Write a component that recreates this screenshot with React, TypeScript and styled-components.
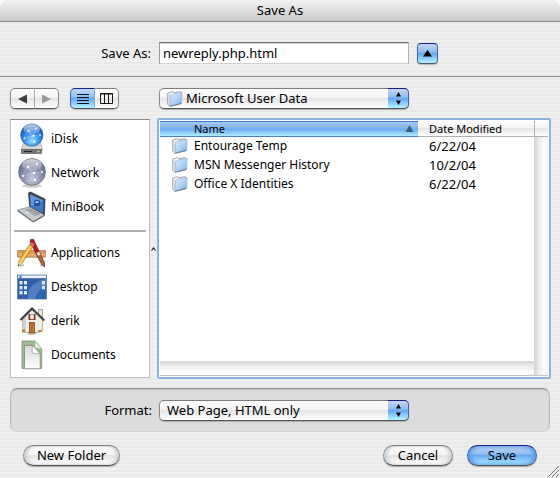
import React from "react";
import styled, { createGlobalStyle, css } from "styled-components";

const silver = "linear-gradient(#ffffff 0%, #f4f4f4 45%, #e4e4e4 50%, #f0f0f0 72%, #ffffff 100%)";
const aqua = "linear-gradient(#c3d9f4 0%, #8fbdf0 42%, #66a8ee 50%, #8ccbfb 74%, #b4f3ff 100%)";
const aquaEdge = "#1c1c86 #3f64a8 #4d545e #3f64a8";
const greyEdge = "#7d7d7d #8b8b8b #555555 #8b8b8b";

const GlobalStyle = createGlobalStyle`
  *, *::before, *::after { box-sizing: border-box; }
  body {
    margin: 0;
    background: #ffffff;
    color: #000000;
    font: 13px/16px "Noto Sans", "Open Sans", sans-serif;
  }
  button, input, select { font: inherit; color: inherit; margin: 0; }
  svg { display: block; flex: none; }
`;

const Sheet = styled.main`
  min-height: 100vh;
  display: flex;
  flex-direction: column;
  overflow: hidden;
  border-radius: 8px 8px 0 0;
  background: repeating-linear-gradient(#efefef 0 2px, #eaeaea 2px 4px);
`;

const TitleBar = styled.header`
  height: 22px;
  padding-top: 2px;
  text-align: center;
  background: linear-gradient(#f2f2f2, #dedede 50%, #c8c8c8);
  border-bottom: 1px solid #8a8a8a;
`;

const Title = styled.h1`
  margin: 0;
  font-size: 13px;
  line-height: 17px;
  font-weight: 400;
`;

const NameRow = styled.div`
  display: flex;
  align-items: center;
  height: 55px;
  padding: 8px 9px 0 0;
  border-bottom: 1px solid #8a8a8a;
`;

const FieldLabel = styled.label<{ $inset?: boolean }>`
  flex: none;
  width: ${(p) => (p.$inset ? 148 : 159)}px;
  padding-right: ${(p) => (p.$inset ? 7 : 8)}px;
  text-align: right;
`;

const NameInput = styled.input`
  width: 250px;
  height: 22px;
  padding: 0 3px;
  border: 1px solid;
  border-color: #6f6f6f #b5b5b5 #d0d0d0 #9c9c9c;
  border-radius: 0;
  background: #ffffff;
  box-shadow: inset 0 1px 0 #d5d5d5;
  outline: none;
`;

const DiscloseButton = styled.button`
  display: grid;
  place-items: center;
  width: 21px;
  height: 21px;
  margin-left: 8px;
  padding: 0;
  border: 1px solid;
  border-color: ${aquaEdge};
  border-radius: 4px;
  background: ${aqua};
  box-shadow: 0 1px 1px #b4b4b4;
`;

const Toolbar = styled.div`
  display: flex;
  padding: 11px 9px 9px 10px;
`;

const Segments = styled.div`
  display: flex;
  width: 49px;
  height: 21px;
  margin-right: 11px;
  box-shadow: 0 1px 1px #bcbcbc;
  border-radius: 5px;
`;

const Segment = styled.button<{ $on?: boolean }>`
  flex: 1;
  display: grid;
  place-items: center;
  padding: 0;
  border: 1px solid;
  border-color: ${greyEdge};
  background: ${silver};
  &:first-child { border-radius: 5px 0 0 5px; }
  &:last-child { border-radius: 0 5px 5px 0; border-left-width: 0; }
  &:first-child { border-right-color: #a8a8a8; }
  ${(p) => p.$on && css`
    && { border-color: ${aquaEdge}; border-right-color: #78afe8; }
    background: ${aqua};
  `}
`;

const PopupWrap = styled.div<{ $indent?: boolean }>`
  display: grid;
  grid-template-columns: 8px 1fr 21px;
  align-items: center;
  width: 250px;
  height: 21px;
  border-radius: 5px;
  box-shadow: 0 1px 1px #b0b0b0;
  margin-left: ${(p) => (p.$indent ? 29 : 0)}px;
  > svg { grid-row: 1; grid-column: 2; z-index: 1; pointer-events: none; }
`;

const PopupSelect = styled.select<{ $icon?: boolean }>`
  grid-row: 1;
  grid-column: 1 / -1;
  width: 100%;
  height: 21px;
  padding: 0 24px 1px ${(p) => (p.$icon ? 26 : 7)}px;
  appearance: none;
  border: 1px solid;
  border-color: ${greyEdge};
  border-radius: 5px;
  background: ${silver};
  outline: none;
`;

const PopupCap = styled.span`
  grid-row: 1;
  grid-column: 3;
  z-index: 1;
  display: grid;
  place-items: center;
  height: 21px;
  border: 1px solid;
  border-color: ${aquaEdge};
  border-left: 0;
  border-radius: 0 5px 5px 0;
  background: ${aqua};
  pointer-events: none;
`;

const Browser = styled.div`
  flex: 1;
  display: flex;
  padding: 0 9px 0 10px;
`;

const Sidebar = styled.nav`
  flex: none;
  width: 140px;
  margin: 1px 0;
  padding: 2px 3px 5px;
  border: 1px solid #bcbcbc;
  border-top-color: #8c8c8c;
  background: #ffffff;
`;

const Place = styled.button`
  display: grid;
  grid-template-columns: 33px 1fr;
  gap: 4px;
  align-items: center;
  width: 100%;
  height: 34px;
  padding: 0;
  border: 0;
  background: none;
  font-size: 12px;
  text-align: left;
  > svg { margin-left: 3px; }
`;

const Divider = styled.hr`
  height: 2px;
  margin: 6px 0 4px;
  border: 0;
  background: #b0b0b0;
`;

const Splitter = styled.div`
  display: grid;
  place-items: center;
  flex: none;
  width: 7px;
`;

const FileList = styled.section`
  flex: 1;
  display: grid;
  grid-template-columns: 1fr 14px;
  grid-template-rows: 16px 1fr 15px;
  min-height: 261px;
  border: 2px solid #8ab4de;
  border-radius: 2px;
  padding: 1px;
  background: #ffffff;
`;

const FileArea = styled.div`
  grid-row: 1 / 3;
  grid-column: 1;
`;

const FileTable = styled.table`
  width: 100%;
  table-layout: fixed;
  border-collapse: separate;
  border-spacing: 0;
`;

const HeadCell = styled.th<{ $sorted?: boolean }>`
  width: ${(p) => (p.$sorted ? "auto" : "116px")};
  height: 16px;
  padding: 0 0 0 ${(p) => (p.$sorted ? 34 : 11)}px;
  border-bottom: 1px solid ${(p) => (p.$sorted ? "#4d7fb8" : "#b0b0b0")};
  background: ${(p) => (p.$sorted ? "linear-gradient(#3a78cc 0 1px, #a6c9f0 1px, #82b4ea 45%, #6eacee 55%, #b0ecff)" : silver)};
  font-size: 11px;
  line-height: 15px;
  font-weight: 400;
  text-align: left;
`;

const HeadInner = styled.div`
  display: flex;
  align-items: center;
  justify-content: space-between;
  height: 15px;
  padding-right: 4px;
`;

const Cell = styled.td<{ $date?: boolean }>`
  height: 19px;
  padding: 0 0 2px ${(p) => (p.$date ? 11 : 12)}px;
  font-size: ${(p) => (p.$date ? 13 : 12)}px;
  white-space: nowrap;
`;

const FileName = styled.span`
  display: flex;
  align-items: center;
  gap: 6px;
`;

const HeadCorner = styled.div`
  border-left: 1px solid #b0b0b0;
  border-bottom: 1px solid #b0b0b0;
  background: ${silver};
`;

const VerticalTrack = styled.div`
  grid-column: 2;
  grid-row: 2 / 4;
  background: linear-gradient(90deg, #d2d2d2, #ececec 35%, #fdfdfd 75%, #f6f6f6);
  border-bottom: 1px solid #c4c4c4;
`;

const HorizontalTrack = styled.div`
  grid-column: 1;
  grid-row: 3;
  background: linear-gradient(#d2d2d2, #ececec 35%, #fdfdfd 75%, #f6f6f6);
  border-bottom: 1px solid #c4c4c4;
`;

const FormatPanel = styled.div`
  display: flex;
  align-items: center;
  height: 44px;
  margin: 9px 10px 0;
  border: 1px solid;
  border-color: #8c8c8c #bcbcbc #d0d0d0;
  border-radius: 7px;
  background: #dcdcdc;
  box-shadow: inset 0 1px 1px #c4c4c4;
`;

const Footer = styled.footer`
  display: flex;
  align-items: flex-start;
  gap: 14px;
  height: 46px;
  padding: 13px 0 0 23px;
`;

const PushButton = styled.button<{ $primary?: boolean; $leading?: boolean }>`
  width: ${(p) => (p.$leading ? 97 : 70)}px;
  height: 21px;
  margin-right: ${(p) => (p.$leading ? "auto" : "0")};
  padding: 0 0 1px;
  border: 1px solid;
  border-color: ${(p) => (p.$primary ? aquaEdge : greyEdge)};
  border-radius: 11px;
  background: ${(p) => (p.$primary ? aqua : silver)};
  box-shadow: 0 1px 1px #a8a8a8${(p) => (p.$primary ? ", inset 3px 0 4px #5c9be4, inset -3px 0 4px #5c9be4" : ", inset 3px 0 3px #d2d2d2, inset -3px 0 3px #d2d2d2")};
`;

const GripHolder = styled.div`
  align-self: flex-end;
  margin-left: -4px;
`;

const Folder = () => (
  <svg width="16" height="16" viewBox="0 0 16 16" aria-hidden="true">
    <defs>
      <linearGradient id="folderFace" x1="0" y1="0" x2="1" y2="1">
        <stop offset="0" stopColor="#dcecfb" />
        <stop offset=".5" stopColor="#b3d3f4" />
        <stop offset="1" stopColor="#75ace5" />
      </linearGradient>
    </defs>
    <path d="M.7 2.2 5.2.6 6.3 1.7 13.5.7V13L2.8 15.2.7 13.3Z" fill="#f4f4f4" stroke="#a3a7ad" />
    <path d="M1.8 3.2 2.7 14" stroke="#c7cbd0" fill="none" />
    <path d="M3.5 4.2 6.5 3.4 7.5 2.5 15.2 1.5 14.6 12 3.2 15.3Z" fill="url(#folderFace)" stroke="#90b4d8" strokeWidth=".7" />
    <path d="M3.2 15.3 14.6 12.2" stroke="#596f88" strokeWidth=".8" />
  </svg>
);

const Arrows = () => (
  <svg width="7" height="13" viewBox="0 0 7 13" aria-hidden="true">
    <path d="M3.5 0 6 4.5H1ZM1 8.5H6L3.5 13Z" fill="#050510" />
  </svg>
);

const Sphere = ({ blue }: { blue?: boolean }) => {
  const id = blue ? "blueSphere" : "greySphere";
  return (
    <>
      <defs>
        <radialGradient id={id} cx=".5" cy=".75" r=".8">
          <stop offset="0" stopColor={blue ? "#8fdcff" : "#c3c9dd"} />
          <stop offset=".45" stopColor={blue ? "#2f8be4" : "#8b91af"} />
          <stop offset="1" stopColor={blue ? "#0b3ea4" : "#555b78"} />
        </radialGradient>
        <linearGradient id={`${id}Shine`} x1="0" y1="0" x2="0" y2="1">
          <stop offset="0" stopColor="#fff" stopOpacity=".75" />
          <stop offset="1" stopColor="#fff" stopOpacity=".08" />
        </linearGradient>
      </defs>
      <circle cx="14" cy="14" r="13.4" fill={`url(#${id})`} stroke={blue ? "#16479b" : "#666b83"} strokeWidth=".7" />
      <g fill="none" stroke="#fff" strokeWidth=".6" opacity=".4">
        <path d="M4 18 10 9 19 6 24 14 17 22 8 23M10 9 17 22M19 6 16 15 4 18M16 15 24 14M10 9 16 15" />
      </g>
      <g fill="#fff">
        <circle cx="10" cy="9" r="1.2" /><circle cx="19" cy="6" r="1" />
        <circle cx="16" cy="15" r="1.3" /><circle cx="24" cy="14" r="1" />
        <circle cx="17" cy="22" r="1.3" /><circle cx="5" cy="18" r="1" />
      </g>
      <ellipse cx="14" cy="7" rx="10" ry="6" fill={`url(#${id}Shine)`} />
    </>
  );
};

const IDiskIcon = () => (
  <svg width="30" height="32" viewBox="0 0 30 32" aria-hidden="true">
    <path d="M7 18H23L26 27H4Z" fill="#d5d5d5" stroke="#aaa" strokeWidth=".6" />
    <rect x="4.5" y="26.5" width="20" height="4" fill="#73767a" stroke="#4e5054" strokeWidth=".6" />
    <path d="M7 28.5H15" stroke="#252525" /><circle cx="21.5" cy="28.5" r="1" fill="#dfe35a" />
    <g transform="translate(3.2 .4) scale(.83)"><Sphere blue /></g>
  </svg>
);

const NetworkIcon = () => (
  <svg width="30" height="30" viewBox="-1 0 30 30" aria-hidden="true">
    <ellipse cx="14" cy="27.8" rx="10" ry="2" fill="#cecece" />
    <Sphere />
  </svg>
);

const LaptopIcon = () => (
  <svg width="30" height="32" viewBox="0 0 30 32" aria-hidden="true">
    <path d="M3 22 18 31 29 25 16 29Z" fill="#d8d8d8" />
    <path d="M11.5 2 13.5 1 28 8 27.3 24.5 12.7 16.5Z" fill="#3f444b" stroke="#25292f" strokeWidth=".7" />
    <path d="M13 3.2 26.6 9.4 26 22 13.8 15.4Z" fill="#3c79c6" />
    <path d="M13 3.2 26.6 9.4 13.8 15.4Z" fill="#74a7df" opacity=".65" />
    <circle cx="20" cy="12" r="3.2" fill="#244f9b" /><path d="M18 12a2 2 0 0 1 4 0" fill="#8ac8ff" />
    <path d="M.6 19 12.7 15.8 27.3 24 16.2 30.5Z" fill="#c9cccf" stroke="#777c80" strokeWidth=".7" />
    <path d="M8 18.6 13.5 17.2 23.6 23 18 24.9Z" fill="#8e9399" />
    <path d="M10 19.3 20 25M12.3 18.5 22 24" stroke="#c7c9cc" strokeWidth=".7" />
    <path d="M6.2 21.2 10 20 14 22.4 10.5 23.8Z" fill="#dfe1e3" stroke="#999" strokeWidth=".4" />
    <path d="M.6 19V20.3L16.2 31.4 27.3 25V24L16.2 30.5Z" fill="#555a60" />
  </svg>
);

const ApplicationsIcon = () => (
  <svg width="30" height="30" viewBox="0 0 30 30" aria-hidden="true">
    <path d="M3 28 7 27M23 27 28 28" stroke="#c8c8c8" strokeWidth="2" />
    <rect x=".7" y="12.7" width="27.6" height="6.4" fill="#e8aa6a" stroke="#9d6536" strokeWidth=".7" />
    <path d="M3 13v2M6 13v3M9 13v2M12 13v3M15 13v2M18 13v3M21 13v2M24 13v3M27 13v2" stroke="#8f5c31" strokeWidth=".6" />
    <path d="M13.5 1.5 16.5 1.2 27.5 25 27.5 28.5 24.8 26.5 13.2 4.5Z" fill="#b51825" stroke="#7a161c" strokeWidth=".6" />
    <path d="M21.6 17 23.4 16 27.5 25 27.5 28.5 24.8 26.5 20.8 19Z" fill="#a66848" stroke="#6b4a3c" strokeWidth=".5" />
    <path d="M19.4 15 22 13.4 23.6 16.6 21.2 18Z" fill="#d9dce1" />
    <path d="M12.6 6.6 16 8.4 5 25.4 1.2 28.2 1.7 23.2Z" fill="#efb730" stroke="#a86d15" strokeWidth=".6" />
    <path d="M14 7.8 3.4 24.5" stroke="#ffe78d" strokeWidth="1.2" />
    <path d="M12.6 6.6 14.1 4.3 17.6 6.1 16 8.4Z" fill="#d9746b" stroke="#8b5147" strokeWidth=".5" />
    <path d="M1.7 23.2 5 25.4 1.2 28.2Z" fill="#ead0a0" /><path d="M1.4 26.3 2.7 27.1 1 28.4Z" fill="#222" />
  </svg>
);

const DesktopIcon = () => (
  <svg width="30" height="26" viewBox="0 0 30 26" aria-hidden="true">
    <rect x=".5" y="1" width="29" height="24" fill="#315fa7" stroke="#6078a0" strokeWidth=".8" />
    <path d="M11 25C10 15 15 8 29 5V18L19 25Z" fill="#6697cd" opacity=".6" />
    <path d="M18 25C20 18 24 14 29 12V25Z" fill="#2c65ad" />
    <path d="M1 1.4H29V4.2H1Z" fill="#eef2f8" /><path d="M2.5 1.4H4.5V4H2.5Z" fill="#2c77d4" />
    <g fill="#dce9f5">
      {[7, 12, 17].map((y) => <React.Fragment key={y}><rect x="2.5" y={y} width="3" height="3.4" /><rect x="7" y={y} width="3" height="3.4" /></React.Fragment>)}
      <rect x="25" y="7" width="3" height="3.4" /><rect x="25" y="12" width="3" height="3.4" />
    </g>
  </svg>
);

const HomeIcon = () => (
  <svg width="30" height="30" viewBox="0 0 30 30" aria-hidden="true">
    <path d="M10 26H22L18 29H11Z" fill="#d1d1d1" />
    <path d="M21.5 3.5H25.5V12L21.5 9Z" fill="#e9e6d9" stroke="#8d8a79" strokeWidth=".7" />
    <path d="M5.5 13 15 4 25.5 13V24.8L20 26.5H9L5.5 24.5Z" fill="#f1eee8" stroke="#96928b" strokeWidth=".7" />
    <path d="M5.8 13.5 9 11V26L5.5 24.5Z" fill="#d1d0cc" />
    <path d="M3.5 14 15 2.5 27.2 14.5" fill="none" stroke="#3d4145" strokeWidth="2.2" />
    <rect x="11.5" y="8" width="7" height="6" fill="#8c321c" /><rect x="13.2" y="8.5" width="3.6" height="4.6" fill="#e9edf0" />
    <rect x="12.5" y="16.5" width="5" height="10.5" fill="#c87932" stroke="#6c3a17" strokeWidth=".7" />
    <path d="M15 17V27" stroke="#97501f" strokeWidth=".7" />
    <path d="M5 23.5H8V26.5H5ZM21 24H25V26H21Z" fill="#b88645" />
  </svg>
);

const DocumentsIcon = () => (
  <svg width="30" height="30" viewBox="0 0 30 30" aria-hidden="true">
    <defs>
      <linearGradient id="paperFace" x1="0" y1="0" x2="0" y2="1">
        <stop offset="0" stopColor="#d8d8d8" /><stop offset="1" stopColor="#ffffff" />
      </linearGradient>
    </defs>
    <path d="M5 1H18L24.7 9V28.5H5Z" fill="#9dbb8f" stroke="#78926d" strokeWidth=".8" />
    <path d="M18 1 17.8 8 24.7 9Z" fill="#e7f2e2" stroke="#8aa27f" strokeWidth=".5" />
    <path d="M7.5 5.5H15.5L23.2 14V28.8H7.5Z" fill="url(#paperFace)" stroke="#858585" strokeWidth=".8" />
    <path d="M15.5 5.5 15 13 23.2 14Z" fill="#fff" stroke="#8c8c8c" strokeWidth=".6" />
  </svg>
);

const files = [
  { name: "Entourage Temp", date: "6/22/04" },
  { name: "MSN Messenger History", date: "10/2/04" },
  { name: "Office X Identities", date: "6/22/04" },
];

const devices = [
  { name: "iDisk", Icon: IDiskIcon },
  { name: "Network", Icon: NetworkIcon },
  { name: "MiniBook", Icon: LaptopIcon },
];

const folders = [
  { name: "Applications", Icon: ApplicationsIcon },
  { name: "Desktop", Icon: DesktopIcon },
  { name: "derik", Icon: HomeIcon },
  { name: "Documents", Icon: DocumentsIcon },
];

export default function App() {
  return (
    <>
      <GlobalStyle />
      <Sheet>
        <TitleBar><Title>Save As</Title></TitleBar>
        <NameRow>
          <FieldLabel htmlFor="filename">Save As:</FieldLabel>
          <NameInput id="filename" defaultValue="newreply.php.html" />
          <DiscloseButton aria-label="Collapse file browser">
            <svg width="9" height="7" viewBox="0 0 9 7"><path d="M4.5 0 9 6.5H0Z" /></svg>
          </DiscloseButton>
        </NameRow>
        <Toolbar>
          <Segments>
            <Segment aria-label="Back">
              <svg width="9" height="10" viewBox="0 0 9 10"><path d="M0 5 9 .5V9.5Z" fill="#3c3c3c" /></svg>
            </Segment>
            <Segment aria-label="Forward">
              <svg width="9" height="10" viewBox="0 0 9 10"><path d="M9 5 0 .5V9.5Z" fill="#999" /></svg>
            </Segment>
          </Segments>
          <Segments>
            <Segment $on aria-label="List view">
              <svg width="12" height="11" viewBox="0 0 12 11"><path d="M0 1.5H12M0 4.5H12M0 7.5H12M0 10.5H12" stroke="#111122" /></svg>
            </Segment>
            <Segment aria-label="Column view">
              <svg width="13" height="11" viewBox="0 0 13 11"><path d="M.5.5H12.5V10.5H.5ZM4.5 0V11M8.5 0V11M0 1H13" fill="none" stroke="#161616" /></svg>
            </Segment>
          </Segments>
          <PopupWrap $indent>
            <PopupSelect $icon aria-label="Location" defaultValue="data">
              <option value="data">Microsoft User Data</option>
            </PopupSelect>
            <Folder />
            <PopupCap><Arrows /></PopupCap>
          </PopupWrap>
        </Toolbar>
        <Browser>
          <Sidebar aria-label="Places">
            {devices.map(({ name, Icon }) => <Place key={name}><Icon />{name}</Place>)}
            <Divider />
            {folders.map(({ name, Icon }) => <Place key={name}><Icon />{name}</Place>)}
          </Sidebar>
          <Splitter>
            <svg width="5" height="4" viewBox="0 0 5 4"><path d="M.5 3.5 2.5 1 4.5 3.5" fill="none" stroke="#222" strokeWidth="1.2" /></svg>
          </Splitter>
          <FileList aria-label="Files">
            <FileArea>
              <FileTable>
                <thead>
                  <tr>
                    <HeadCell $sorted aria-sort="ascending">
                      <HeadInner>
                        Name
                        <svg width="9" height="8" viewBox="0 0 9 8"><path d="M4.5 0 8.5 7H.5Z" fill="#3d5f85" /></svg>
                      </HeadInner>
                    </HeadCell>
                    <HeadCell>Date Modified</HeadCell>
                  </tr>
                </thead>
                <tbody>
                  {files.map((file) => (
                    <tr key={file.name}>
                      <Cell><FileName><Folder />{file.name}</FileName></Cell>
                      <Cell $date>{file.date}</Cell>
                    </tr>
                  ))}
                </tbody>
              </FileTable>
            </FileArea>
            <HeadCorner />
            <VerticalTrack />
            <HorizontalTrack />
          </FileList>
        </Browser>
        <FormatPanel>
          <FieldLabel $inset htmlFor="format">Format:</FieldLabel>
          <PopupWrap>
            <PopupSelect id="format" defaultValue="html">
              <option value="html">Web Page, HTML only</option>
            </PopupSelect>
            <PopupCap><Arrows /></PopupCap>
          </PopupWrap>
        </FormatPanel>
        <Footer>
          <PushButton $leading>New Folder</PushButton>
          <PushButton>Cancel</PushButton>
          <PushButton $primary>Save</PushButton>
          <GripHolder>
            <svg width="13" height="13" viewBox="0 0 13 13" aria-hidden="true">
              <path d="M1 12 12 1M5 12 12 5M9 12 12 9" stroke="#777" />
              <path d="M2 13 13 2M6 13 13 6M10 13 13 10" stroke="#fff" strokeWidth=".7" />
            </svg>
          </GripHolder>
        </Footer>
      </Sheet>
    </>
  );
}
